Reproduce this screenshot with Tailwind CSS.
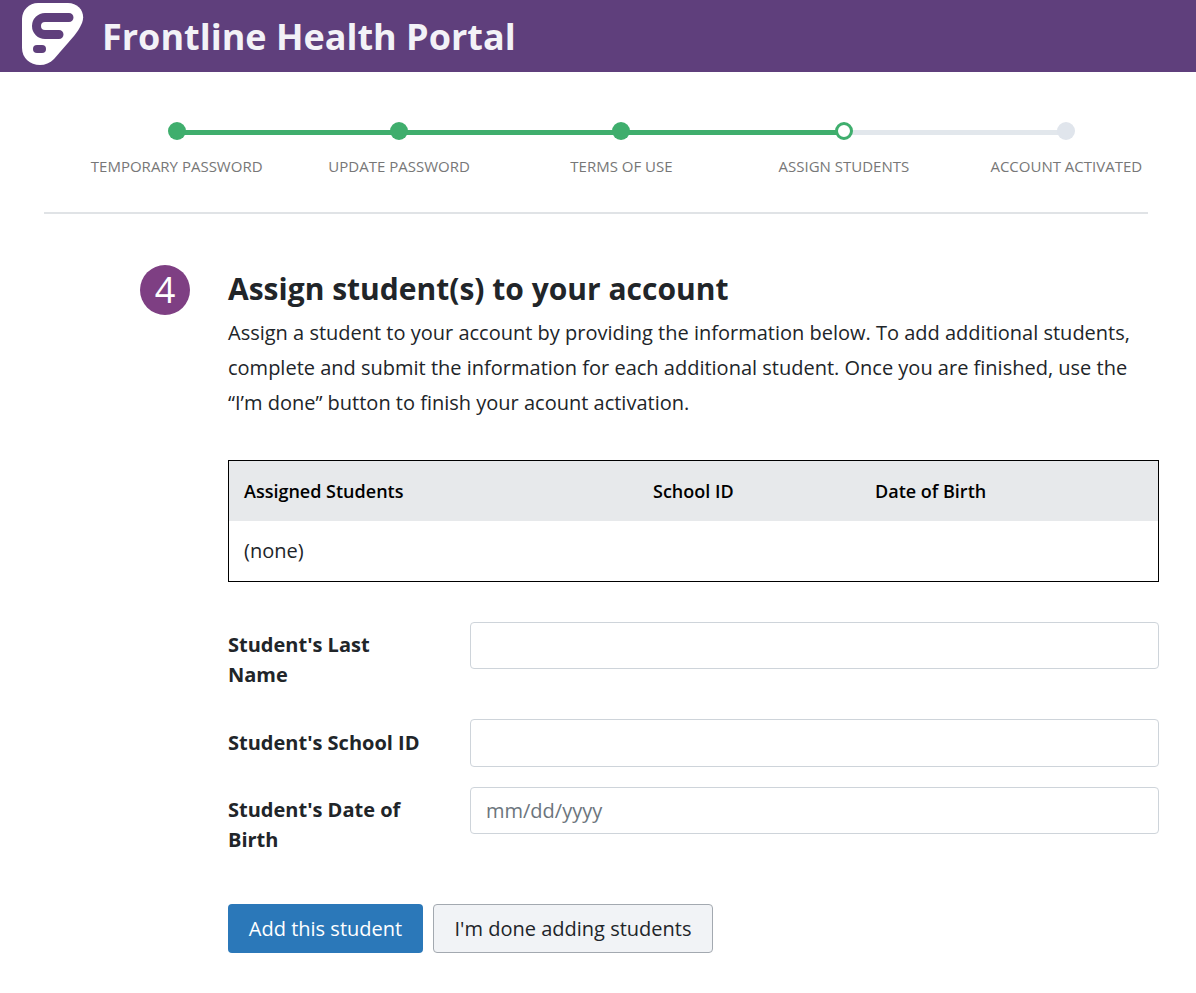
<!DOCTYPE html>
<html lang="en">
<head>
<meta charset="utf-8">
<title>Frontline Health Portal</title>
<script src="https://cdn.jsdelivr.net/npm/@tailwindcss/browser@4"></script>
</head>
<body class="bg-white font-['Open_Sans',sans-serif] text-[#212529]">
<header class="h-[72px] bg-[#5f3f7c] flex items-start pl-[22px] overflow-hidden">
  <svg class="w-[62px] h-[62px] mt-[3px] shrink-0" viewBox="0 0 62 62" fill="none">
    <path d="M16 0H46C57 0 64 10 60 20C58 25 55 29 52 33L32 56C28 60 23 62 18 62C8 62 0 55 0 45V16C0 7 7 0 16 0Z" fill="#fff"/>
    <path d="M47 14.500H23A8.500 8.500 0 0 0 23 31.500H37" stroke="#5f3f7c" stroke-width="9" stroke-linecap="round" stroke-linejoin="round"/>
    <rect x="11" y="42" width="13" height="8" rx="4" fill="#5f3f7c"/>
  </svg>
  <h1 class="ml-[18px] mt-[12px] text-[36px] leading-[50px] font-bold text-[#f3f2f7]">Frontline Health Portal</h1>
</header>

<section class="mx-[44px] w-[1104px] h-[142px] border-b-2 border-[#e0e3e6]">
  <ol class="relative ml-[21.500px] w-[1112px] grid grid-cols-5 pt-[50px]">
    <li class="relative flex flex-col items-center">
      <span class="absolute left-1/2 top-[8px] w-full h-[5px] bg-[#3fae6d]"></span>
      <span class="relative w-[18px] h-[18px] rounded-full bg-[#3fae6d]"></span>
      <span class="mt-[16px] text-[15px] leading-[20px] text-[#777] whitespace-nowrap">TEMPORARY PASSWORD</span>
    </li>
    <li class="relative flex flex-col items-center">
      <span class="absolute left-1/2 top-[8px] w-full h-[5px] bg-[#3fae6d]"></span>
      <span class="relative w-[18px] h-[18px] rounded-full bg-[#3fae6d]"></span>
      <span class="mt-[16px] text-[15px] leading-[20px] text-[#777] whitespace-nowrap">UPDATE PASSWORD</span>
    </li>
    <li class="relative flex flex-col items-center">
      <span class="absolute left-1/2 top-[8px] w-full h-[5px] bg-[#3fae6d]"></span>
      <span class="relative w-[18px] h-[18px] rounded-full bg-[#3fae6d]"></span>
      <span class="mt-[16px] text-[15px] leading-[20px] text-[#777] whitespace-nowrap">TERMS OF USE</span>
    </li>
    <li class="relative flex flex-col items-center">
      <span class="absolute left-1/2 top-[8px] w-full h-[5px] bg-[#e2e7ec]"></span>
      <span class="relative w-[18px] h-[18px] rounded-full bg-white border-[3px] border-[#3fae6d]"></span>
      <span class="mt-[16px] text-[15px] leading-[20px] text-[#777] whitespace-nowrap">ASSIGN STUDENTS</span>
    </li>
    <li class="relative flex flex-col items-center">
      <span class="relative w-[18px] h-[18px] rounded-full bg-[#e0e5ec]"></span>
      <span class="mt-[16px] text-[15px] leading-[20px] text-[#777] whitespace-nowrap">ACCOUNT ACTIVATED</span>
    </li>
  </ol>
</section>

<main class="flex pl-[140px] pt-[51px]">
  <div class="w-[50px] h-[50px] rounded-full bg-[#7e3f83] text-white text-[36px] font-normal flex items-center justify-center shrink-0">4</div>
  <div class="ml-[38px] w-[931px]">
    <h2 class="text-[30px] leading-[48px] font-bold text-[#212529]">Assign student(s) to your account</h2>
    <p class="text-[20px] leading-[35px] mt-[2px] text-[#212529]">Assign a student to your account by providing the information below. To add additional students, complete and submit the information for each additional student. Once you are finished, use the “I’m done” button to finish your acount activation.</p>

    <div class="mt-[40px] border border-black h-[122px]">
      <div class="grid grid-cols-[409px_222px_1fr] h-[60px] items-center bg-[#e7e9eb] pl-[15px] text-[18px] font-semibold text-black">
        <span>Assigned Students</span><span>School ID</span><span>Date of Birth</span>
      </div>
      <div class="h-[60px] flex items-center pl-[15px] text-[20px]">(none)</div>
    </div>

    <form class="mt-[40px]">
      <div class="flex h-[97px]">
        <label class="w-[242px] pr-[60px] text-[20px] leading-[30px] font-bold pt-[8px]">Student's Last Name</label>
        <input type="text" class="w-[689px] h-[47px] border border-[#ced4da] rounded-[4px] bg-white">
      </div>
      <div class="flex h-[68px]">
        <label class="w-[242px] text-[20px] leading-[30px] font-bold pt-[9px]">Student's School ID</label>
        <input type="text" class="w-[689px] h-[48px] border border-[#ced4da] rounded-[4px] bg-white">
      </div>
      <div class="flex h-[117px]">
        <label class="w-[242px] pr-[20px] text-[20px] leading-[30px] font-bold pt-[8px]">Student's Date of Birth</label>
        <input type="text" placeholder="mm/dd/yyyy" class="w-[689px] h-[47px] px-[15px] text-[20px] border border-[#ced4da] rounded-[4px] bg-white placeholder:text-[#6c757d]">
      </div>
      <div class="flex gap-[10px]">
        <button type="button" class="w-[195px] h-[49px] rounded-[4px] bg-[#2b78b9] text-white text-[20px]">Add this student</button>
        <button type="button" class="w-[280px] h-[49px] rounded-[4px] bg-[#f1f3f6] border border-[#a3a9b0] text-[#212529] text-[20px]">I'm done adding students</button>
      </div>
    </form>
  </div>
</main>
</body>
</html>
